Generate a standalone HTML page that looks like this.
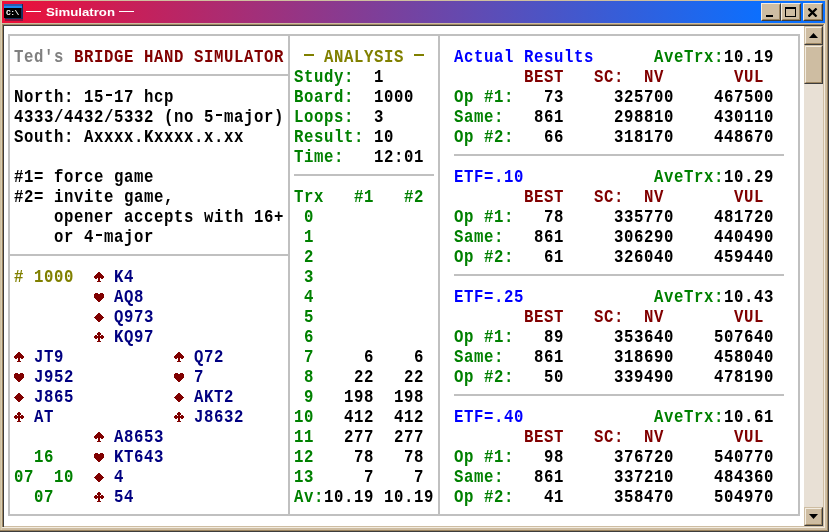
<!DOCTYPE html>
<html><head><meta charset="utf-8"><title>Simulatron</title>
<style>
html,body{margin:0;padding:0}
body{width:829px;height:532px;overflow:hidden;background:#cebda2;position:relative;font-family:"Liberation Mono",monospace}
.a{position:absolute}
.t{position:absolute;white-space:pre;font:bold 16.664px/20px "Liberation Mono",monospace;height:20px;transform-origin:0 16px;transform:scale(0.94,1.090);letter-spacing:0.638px;margin-left:0.4px}
.r{position:absolute}
.t s{color:transparent;text-decoration:none}
svg.s{position:absolute;width:10px;height:10px;fill:#800000;shape-rendering:crispEdges}
</style></head><body>
<div class="a" style="left:0;top:0;width:829px;height:532px;will-change:transform">
<!-- frame -->
<div class="a" style="left:0;top:0;width:829px;height:532px;background:#cfbf9f"></div>
<div class="a" style="left:1px;top:1px;width:826px;height:529px;background:#d9ceb2"></div>
<div class="a" style="left:827px;top:0;width:1px;height:531px;background:#9c8560"></div>
<div class="a" style="left:0;top:530px;width:828px;height:1px;background:#9c8560"></div>
<div class="a" style="left:828px;top:0;width:1px;height:532px;background:#3c3c3c"></div>
<div class="a" style="left:0;top:531px;width:829px;height:1px;background:#3c3c3c"></div>
<div class="a" style="left:2px;top:1px;width:825px;height:529px;background:#cebda2"></div>
<!-- title bar -->
<div class="a" style="left:2px;top:1px;width:823px;height:22px;background:linear-gradient(90deg,#ee0f37 0%,#0a70ff 93%)"></div>
<!-- icon -->
<div class="a" style="left:5px;top:19px;width:18px;height:2px;background:#8c1540"></div>
<div class="a" style="left:5px;top:4px;width:18px;height:15px;background:#16305c"></div>
<div class="a" style="left:4px;top:4px;width:18px;height:2px;background:#2a5cb0"></div>
<div class="a" style="left:4px;top:6px;width:18px;height:2px;background:#1e8cf0"></div>
<div class="a" style="left:4px;top:8px;width:17px;height:10px;background:#000"></div>
<div class="a" style="left:6px;top:8px;width:14px;height:10px;color:#fff;font:bold 8px/10px 'Liberation Mono',monospace;letter-spacing:-0.6px">C:\</div>
<!-- title text -->
<div class="a" style="left:26px;top:11px;width:15px;height:1px;background:#fff"></div>
<div class="a" style="left:119px;top:11px;width:15px;height:1px;background:#fff"></div>
<div class="a" id="ttl" style="left:46px;top:4px;height:16px;color:#fff;font:bold 11px/16px 'Liberation Sans',sans-serif;white-space:pre;transform-origin:0 0;transform:scaleX(1.2)">Simulatron</div>
<!-- caption buttons -->
<div class="a btn" style="left:761px;top:3px;width:20px;height:18px"><i></i><div class="a" style="left:4px;top:11px;width:7px;height:2px;background:#000"></div></div>
<div class="a btn" style="left:781px;top:3px;width:20px;height:18px"><i></i><div class="a" style="left:3px;top:3px;width:9px;height:7px;border:1px solid #000;border-top-width:2px"></div></div>
<div class="a btn" style="left:803px;top:3px;width:20px;height:18px"><i></i><svg class="a" style="left:4px;top:4px" width="10" height="9" viewBox="0 0 10 9"><path d="M0.5 0.5 L8.5 8.5 M8.5 0.5 L0.5 8.5" stroke="#000" stroke-width="2.3" fill="none"/></svg></div>
<!-- sunken client edge -->
<div class="a" style="left:2px;top:24px;width:822px;height:1px;background:#9c8560"></div>
<div class="a" style="left:2px;top:24px;width:1px;height:503px;background:#9c8560"></div>
<div class="a" style="left:3px;top:25px;width:820px;height:1px;background:#3c3c3c"></div>
<div class="a" style="left:3px;top:25px;width:1px;height:502px;background:#3c3c3c"></div>
<div class="a" style="left:824px;top:24px;width:1px;height:504px;background:#f3ece0"></div>
<div class="a" style="left:2px;top:527px;width:823px;height:1px;background:#f3ece0"></div>
<!-- scrollbar -->
<div class="a" style="left:804px;top:26px;width:19px;height:500px;background:#e8e0d5"></div>
<div class="a btn sb" style="left:804px;top:26px;width:19px;height:19px"><i></i><svg class="a" style="left:4px;top:6px" width="9" height="5" viewBox="0 0 9 5"><path d="M0 5 L4.5 0 L9 5 Z" fill="#000"/></svg></div>
<div class="a btn sb" style="left:804px;top:45px;width:19px;height:39px"><i></i></div>
<div class="a btn sb" style="left:804px;top:507px;width:19px;height:19px"><i></i><svg class="a" style="left:4px;top:6px" width="9" height="5" viewBox="0 0 9 5"><path d="M0 0 L4.5 5 L9 0 Z" fill="#000"/></svg></div>
<style>
.btn{background:#cebda2;box-sizing:border-box;border:1px solid;border-color:#f3ece0 #3c3c3c #3c3c3c #f3ece0}
.btn>i{position:absolute;left:0;top:0;right:0;bottom:0;border:1px solid;border-color:#cebda2 #9c8560 #9c8560 #cebda2}
.sb{border-color:#cebda2 #3c3c3c #3c3c3c #cebda2}
.sb>i{border-color:#f3ece0 #9c8560 #9c8560 #f3ece0}
</style>
<div class="a" style="left:4px;top:26px;width:800px;height:500px;background:#fff"></div>
<div class="r" style="left:8px;top:34px;width:792px;height:2px;background:#c0c0c0"></div>
<div class="r" style="left:8px;top:514px;width:792px;height:2px;background:#c0c0c0"></div>
<div class="r" style="left:8px;top:34px;width:2px;height:482px;background:#c0c0c0"></div>
<div class="r" style="left:798px;top:34px;width:2px;height:482px;background:#c0c0c0"></div>
<div class="r" style="left:288px;top:34px;width:2px;height:482px;background:#c0c0c0"></div>
<div class="r" style="left:438px;top:34px;width:2px;height:482px;background:#c0c0c0"></div>
<div class="r" style="left:8px;top:74px;width:282px;height:2px;background:#c0c0c0"></div>
<div class="r" style="left:8px;top:254px;width:282px;height:2px;background:#c0c0c0"></div>
<div class="r" style="left:294px;top:174px;width:140px;height:2px;background:#c0c0c0"></div>
<div class="r" style="left:454px;top:154px;width:330px;height:2px;background:#c0c0c0"></div>
<div class="r" style="left:454px;top:274px;width:330px;height:2px;background:#c0c0c0"></div>
<div class="r" style="left:454px;top:394px;width:330px;height:2px;background:#c0c0c0"></div>
<div class="r" style="left:304px;top:54px;width:10px;height:2px;background:#808000"></div>
<div class="r" style="left:414px;top:54px;width:10px;height:2px;background:#808000"></div>
<div class="t" style="left:14px;top:48.0px;color:#808080">Ted's</div>
<div class="t" style="left:74px;top:48.0px;color:#800000">BRIDGE HAND SIMULATOR</div>
<div class="r" style="left:106px;top:94px;width:6px;height:2px;background:#000000"></div>
<div class="t" style="left:14px;top:88.0px;color:#000000">North: 15<s>-</s>17 hcp</div>
<div class="r" style="left:216px;top:114px;width:6px;height:2px;background:#000000"></div>
<div class="t" style="left:14px;top:108.0px;color:#000000">4333/4432/5332 (no 5<s>-</s>major)</div>
<div class="t" style="left:14px;top:128.0px;color:#000000">South: Axxxx.Kxxxx.x.xx</div>
<div class="t" style="left:14px;top:168.0px;color:#000000">#1= force game</div>
<div class="t" style="left:14px;top:188.0px;color:#000000">#2= invite game,</div>
<div class="t" style="left:54px;top:208.0px;color:#000000">opener accepts with 16+</div>
<div class="r" style="left:96px;top:234px;width:6px;height:2px;background:#000000"></div>
<div class="t" style="left:54px;top:228.0px;color:#000000">or 4<s>-</s>major</div>
<div class="t" style="left:14px;top:268.0px;color:#808000"># 1000</div>
<div class="t" style="left:114px;top:268.0px;color:#000080">K4</div>
<div class="t" style="left:114px;top:288.0px;color:#000080">AQ8</div>
<div class="t" style="left:114px;top:308.0px;color:#000080">Q973</div>
<div class="t" style="left:114px;top:328.0px;color:#000080">KQ97</div>
<div class="t" style="left:34px;top:348.0px;color:#000080">JT9</div>
<div class="t" style="left:34px;top:368.0px;color:#000080">J952</div>
<div class="t" style="left:34px;top:388.0px;color:#000080">J865</div>
<div class="t" style="left:34px;top:408.0px;color:#000080">AT</div>
<div class="t" style="left:194px;top:348.0px;color:#000080">Q72</div>
<div class="t" style="left:194px;top:368.0px;color:#000080">7</div>
<div class="t" style="left:194px;top:388.0px;color:#000080">AKT2</div>
<div class="t" style="left:194px;top:408.0px;color:#000080">J8632</div>
<div class="t" style="left:114px;top:428.0px;color:#000080">A8653</div>
<div class="t" style="left:114px;top:448.0px;color:#000080">KT643</div>
<div class="t" style="left:114px;top:468.0px;color:#000080">4</div>
<div class="t" style="left:114px;top:488.0px;color:#000080">54</div>
<div class="t" style="left:34px;top:448.0px;color:#008000">16</div>
<div class="t" style="left:14px;top:468.0px;color:#008000">07</div>
<div class="t" style="left:54px;top:468.0px;color:#008000">10</div>
<div class="t" style="left:34px;top:488.0px;color:#008000">07</div>
<div class="t" style="left:324px;top:48.0px;color:#808000">ANALYSIS</div>
<div class="t" style="left:294px;top:68.0px;color:#008000">Study:</div>
<div class="t" style="left:374px;top:68.0px;color:#000000">1</div>
<div class="t" style="left:294px;top:88.0px;color:#008000">Board:</div>
<div class="t" style="left:374px;top:88.0px;color:#000000">1000</div>
<div class="t" style="left:294px;top:108.0px;color:#008000">Loops:</div>
<div class="t" style="left:374px;top:108.0px;color:#000000">3</div>
<div class="t" style="left:294px;top:128.0px;color:#008000">Result:</div>
<div class="t" style="left:374px;top:128.0px;color:#000000">10</div>
<div class="t" style="left:294px;top:148.0px;color:#008000">Time:</div>
<div class="t" style="left:374px;top:148.0px;color:#000000">12:01</div>
<div class="t" style="left:294px;top:188.0px;color:#008000">Trx</div>
<div class="t" style="left:354px;top:188.0px;color:#008000">#1</div>
<div class="t" style="left:404px;top:188.0px;color:#008000">#2</div>
<div class="t" style="left:304px;top:208.0px;color:#008000">0</div>
<div class="t" style="left:304px;top:228.0px;color:#008000">1</div>
<div class="t" style="left:304px;top:248.0px;color:#008000">2</div>
<div class="t" style="left:304px;top:268.0px;color:#008000">3</div>
<div class="t" style="left:304px;top:288.0px;color:#008000">4</div>
<div class="t" style="left:304px;top:308.0px;color:#008000">5</div>
<div class="t" style="left:304px;top:328.0px;color:#008000">6</div>
<div class="t" style="left:304px;top:348.0px;color:#008000">7</div>
<div class="t" style="left:364px;top:348.0px;color:#000000">6</div>
<div class="t" style="left:414px;top:348.0px;color:#000000">6</div>
<div class="t" style="left:304px;top:368.0px;color:#008000">8</div>
<div class="t" style="left:354px;top:368.0px;color:#000000">22</div>
<div class="t" style="left:404px;top:368.0px;color:#000000">22</div>
<div class="t" style="left:304px;top:388.0px;color:#008000">9</div>
<div class="t" style="left:344px;top:388.0px;color:#000000">198</div>
<div class="t" style="left:394px;top:388.0px;color:#000000">198</div>
<div class="t" style="left:294px;top:408.0px;color:#008000">10</div>
<div class="t" style="left:344px;top:408.0px;color:#000000">412</div>
<div class="t" style="left:394px;top:408.0px;color:#000000">412</div>
<div class="t" style="left:294px;top:428.0px;color:#008000">11</div>
<div class="t" style="left:344px;top:428.0px;color:#000000">277</div>
<div class="t" style="left:394px;top:428.0px;color:#000000">277</div>
<div class="t" style="left:294px;top:448.0px;color:#008000">12</div>
<div class="t" style="left:354px;top:448.0px;color:#000000">78</div>
<div class="t" style="left:404px;top:448.0px;color:#000000">78</div>
<div class="t" style="left:294px;top:468.0px;color:#008000">13</div>
<div class="t" style="left:364px;top:468.0px;color:#000000">7</div>
<div class="t" style="left:414px;top:468.0px;color:#000000">7</div>
<div class="t" style="left:294px;top:488.0px;color:#008000">Av:</div>
<div class="t" style="left:324px;top:488.0px;color:#000000">10.19 10.19</div>
<div class="t" style="left:454px;top:48.0px;color:#0000ff">Actual Results</div>
<div class="t" style="left:654px;top:48.0px;color:#008000">AveTrx:</div>
<div class="t" style="left:724px;top:48.0px;color:#000000">10.19</div>
<div class="t" style="left:524px;top:68.0px;color:#800000">BEST</div>
<div class="t" style="left:594px;top:68.0px;color:#800000">SC:</div>
<div class="t" style="left:644px;top:68.0px;color:#800000">NV</div>
<div class="t" style="left:734px;top:68.0px;color:#800000">VUL</div>
<div class="t" style="left:454px;top:88.0px;color:#008000">Op #1:</div>
<div class="t" style="left:544px;top:88.0px;color:#000000">73</div>
<div class="t" style="left:614px;top:88.0px;color:#000000">325700</div>
<div class="t" style="left:714px;top:88.0px;color:#000000">467500</div>
<div class="t" style="left:454px;top:108.0px;color:#008000">Same:</div>
<div class="t" style="left:534px;top:108.0px;color:#000000">861</div>
<div class="t" style="left:614px;top:108.0px;color:#000000">298810</div>
<div class="t" style="left:714px;top:108.0px;color:#000000">430110</div>
<div class="t" style="left:454px;top:128.0px;color:#008000">Op #2:</div>
<div class="t" style="left:544px;top:128.0px;color:#000000">66</div>
<div class="t" style="left:614px;top:128.0px;color:#000000">318170</div>
<div class="t" style="left:714px;top:128.0px;color:#000000">448670</div>
<div class="t" style="left:454px;top:168.0px;color:#0000ff">ETF=.10</div>
<div class="t" style="left:654px;top:168.0px;color:#008000">AveTrx:</div>
<div class="t" style="left:724px;top:168.0px;color:#000000">10.29</div>
<div class="t" style="left:524px;top:188.0px;color:#800000">BEST</div>
<div class="t" style="left:594px;top:188.0px;color:#800000">SC:</div>
<div class="t" style="left:644px;top:188.0px;color:#800000">NV</div>
<div class="t" style="left:734px;top:188.0px;color:#800000">VUL</div>
<div class="t" style="left:454px;top:208.0px;color:#008000">Op #1:</div>
<div class="t" style="left:544px;top:208.0px;color:#000000">78</div>
<div class="t" style="left:614px;top:208.0px;color:#000000">335770</div>
<div class="t" style="left:714px;top:208.0px;color:#000000">481720</div>
<div class="t" style="left:454px;top:228.0px;color:#008000">Same:</div>
<div class="t" style="left:534px;top:228.0px;color:#000000">861</div>
<div class="t" style="left:614px;top:228.0px;color:#000000">306290</div>
<div class="t" style="left:714px;top:228.0px;color:#000000">440490</div>
<div class="t" style="left:454px;top:248.0px;color:#008000">Op #2:</div>
<div class="t" style="left:544px;top:248.0px;color:#000000">61</div>
<div class="t" style="left:614px;top:248.0px;color:#000000">326040</div>
<div class="t" style="left:714px;top:248.0px;color:#000000">459440</div>
<div class="t" style="left:454px;top:288.0px;color:#0000ff">ETF=.25</div>
<div class="t" style="left:654px;top:288.0px;color:#008000">AveTrx:</div>
<div class="t" style="left:724px;top:288.0px;color:#000000">10.43</div>
<div class="t" style="left:524px;top:308.0px;color:#800000">BEST</div>
<div class="t" style="left:594px;top:308.0px;color:#800000">SC:</div>
<div class="t" style="left:644px;top:308.0px;color:#800000">NV</div>
<div class="t" style="left:734px;top:308.0px;color:#800000">VUL</div>
<div class="t" style="left:454px;top:328.0px;color:#008000">Op #1:</div>
<div class="t" style="left:544px;top:328.0px;color:#000000">89</div>
<div class="t" style="left:614px;top:328.0px;color:#000000">353640</div>
<div class="t" style="left:714px;top:328.0px;color:#000000">507640</div>
<div class="t" style="left:454px;top:348.0px;color:#008000">Same:</div>
<div class="t" style="left:534px;top:348.0px;color:#000000">861</div>
<div class="t" style="left:614px;top:348.0px;color:#000000">318690</div>
<div class="t" style="left:714px;top:348.0px;color:#000000">458040</div>
<div class="t" style="left:454px;top:368.0px;color:#008000">Op #2:</div>
<div class="t" style="left:544px;top:368.0px;color:#000000">50</div>
<div class="t" style="left:614px;top:368.0px;color:#000000">339490</div>
<div class="t" style="left:714px;top:368.0px;color:#000000">478190</div>
<div class="t" style="left:454px;top:408.0px;color:#0000ff">ETF=.40</div>
<div class="t" style="left:654px;top:408.0px;color:#008000">AveTrx:</div>
<div class="t" style="left:724px;top:408.0px;color:#000000">10.61</div>
<div class="t" style="left:524px;top:428.0px;color:#800000">BEST</div>
<div class="t" style="left:594px;top:428.0px;color:#800000">SC:</div>
<div class="t" style="left:644px;top:428.0px;color:#800000">NV</div>
<div class="t" style="left:734px;top:428.0px;color:#800000">VUL</div>
<div class="t" style="left:454px;top:448.0px;color:#008000">Op #1:</div>
<div class="t" style="left:544px;top:448.0px;color:#000000">98</div>
<div class="t" style="left:614px;top:448.0px;color:#000000">376720</div>
<div class="t" style="left:714px;top:448.0px;color:#000000">540770</div>
<div class="t" style="left:454px;top:468.0px;color:#008000">Same:</div>
<div class="t" style="left:534px;top:468.0px;color:#000000">861</div>
<div class="t" style="left:614px;top:468.0px;color:#000000">337210</div>
<div class="t" style="left:714px;top:468.0px;color:#000000">484360</div>
<div class="t" style="left:454px;top:488.0px;color:#008000">Op #2:</div>
<div class="t" style="left:544px;top:488.0px;color:#000000">41</div>
<div class="t" style="left:614px;top:488.0px;color:#000000">358470</div>
<div class="t" style="left:714px;top:488.0px;color:#000000">504970</div>
<svg class="s" viewBox="0 0 10 10" style="left:94px;top:272px;height:10px"><path d="M4 0h2v1h-2zM3 1h4v1h-4zM2 2h6v1h-6zM1 3h8v1h-8zM0 4h10v1h-10zM0 5h10v1h-10zM1 6h2v1h-2zM4 6h2v1h-2zM7 6h2v1h-2zM4 7h2v1h-2zM4 8h2v1h-2zM3 9h4v1h-4z"/></svg>
<svg class="s" viewBox="0 0 10 9" style="left:94px;top:293px;height:9px"><path d="M1 0h3v1h-3zM6 0h3v1h-3zM0 1h10v1h-10zM0 2h10v1h-10zM0 3h10v1h-10zM0 4h10v1h-10zM1 5h8v1h-8zM2 6h6v1h-6zM3 7h4v1h-4zM4 8h2v1h-2z"/></svg>
<svg class="s" viewBox="0 0 10 9" style="left:94px;top:313px;height:9px"><path d="M4 0h2v1h-2zM3 1h4v1h-4zM2 2h6v1h-6zM1 3h8v1h-8zM0 4h10v1h-10zM1 5h8v1h-8zM2 6h6v1h-6zM3 7h4v1h-4zM4 8h2v1h-2z"/></svg>
<svg class="s" viewBox="0 0 10 10" style="left:94px;top:332px;height:10px"><path d="M4 0h2v1h-2zM3 1h4v1h-4zM3 2h4v1h-4zM1 3h2v1h-2zM4 3h2v1h-2zM7 3h2v1h-2zM0 4h10v1h-10zM0 5h10v1h-10zM1 6h2v1h-2zM4 6h2v1h-2zM7 6h2v1h-2zM4 7h2v1h-2zM4 8h2v1h-2zM3 9h4v1h-4z"/></svg>
<svg class="s" viewBox="0 0 10 10" style="left:14px;top:352px;height:10px"><path d="M4 0h2v1h-2zM3 1h4v1h-4zM2 2h6v1h-6zM1 3h8v1h-8zM0 4h10v1h-10zM0 5h10v1h-10zM1 6h2v1h-2zM4 6h2v1h-2zM7 6h2v1h-2zM4 7h2v1h-2zM4 8h2v1h-2zM3 9h4v1h-4z"/></svg>
<svg class="s" viewBox="0 0 10 9" style="left:14px;top:373px;height:9px"><path d="M1 0h3v1h-3zM6 0h3v1h-3zM0 1h10v1h-10zM0 2h10v1h-10zM0 3h10v1h-10zM0 4h10v1h-10zM1 5h8v1h-8zM2 6h6v1h-6zM3 7h4v1h-4zM4 8h2v1h-2z"/></svg>
<svg class="s" viewBox="0 0 10 9" style="left:14px;top:393px;height:9px"><path d="M4 0h2v1h-2zM3 1h4v1h-4zM2 2h6v1h-6zM1 3h8v1h-8zM0 4h10v1h-10zM1 5h8v1h-8zM2 6h6v1h-6zM3 7h4v1h-4zM4 8h2v1h-2z"/></svg>
<svg class="s" viewBox="0 0 10 10" style="left:14px;top:412px;height:10px"><path d="M4 0h2v1h-2zM3 1h4v1h-4zM3 2h4v1h-4zM1 3h2v1h-2zM4 3h2v1h-2zM7 3h2v1h-2zM0 4h10v1h-10zM0 5h10v1h-10zM1 6h2v1h-2zM4 6h2v1h-2zM7 6h2v1h-2zM4 7h2v1h-2zM4 8h2v1h-2zM3 9h4v1h-4z"/></svg>
<svg class="s" viewBox="0 0 10 10" style="left:174px;top:352px;height:10px"><path d="M4 0h2v1h-2zM3 1h4v1h-4zM2 2h6v1h-6zM1 3h8v1h-8zM0 4h10v1h-10zM0 5h10v1h-10zM1 6h2v1h-2zM4 6h2v1h-2zM7 6h2v1h-2zM4 7h2v1h-2zM4 8h2v1h-2zM3 9h4v1h-4z"/></svg>
<svg class="s" viewBox="0 0 10 9" style="left:174px;top:373px;height:9px"><path d="M1 0h3v1h-3zM6 0h3v1h-3zM0 1h10v1h-10zM0 2h10v1h-10zM0 3h10v1h-10zM0 4h10v1h-10zM1 5h8v1h-8zM2 6h6v1h-6zM3 7h4v1h-4zM4 8h2v1h-2z"/></svg>
<svg class="s" viewBox="0 0 10 9" style="left:174px;top:393px;height:9px"><path d="M4 0h2v1h-2zM3 1h4v1h-4zM2 2h6v1h-6zM1 3h8v1h-8zM0 4h10v1h-10zM1 5h8v1h-8zM2 6h6v1h-6zM3 7h4v1h-4zM4 8h2v1h-2z"/></svg>
<svg class="s" viewBox="0 0 10 10" style="left:174px;top:412px;height:10px"><path d="M4 0h2v1h-2zM3 1h4v1h-4zM3 2h4v1h-4zM1 3h2v1h-2zM4 3h2v1h-2zM7 3h2v1h-2zM0 4h10v1h-10zM0 5h10v1h-10zM1 6h2v1h-2zM4 6h2v1h-2zM7 6h2v1h-2zM4 7h2v1h-2zM4 8h2v1h-2zM3 9h4v1h-4z"/></svg>
<svg class="s" viewBox="0 0 10 10" style="left:94px;top:432px;height:10px"><path d="M4 0h2v1h-2zM3 1h4v1h-4zM2 2h6v1h-6zM1 3h8v1h-8zM0 4h10v1h-10zM0 5h10v1h-10zM1 6h2v1h-2zM4 6h2v1h-2zM7 6h2v1h-2zM4 7h2v1h-2zM4 8h2v1h-2zM3 9h4v1h-4z"/></svg>
<svg class="s" viewBox="0 0 10 9" style="left:94px;top:453px;height:9px"><path d="M1 0h3v1h-3zM6 0h3v1h-3zM0 1h10v1h-10zM0 2h10v1h-10zM0 3h10v1h-10zM0 4h10v1h-10zM1 5h8v1h-8zM2 6h6v1h-6zM3 7h4v1h-4zM4 8h2v1h-2z"/></svg>
<svg class="s" viewBox="0 0 10 9" style="left:94px;top:473px;height:9px"><path d="M4 0h2v1h-2zM3 1h4v1h-4zM2 2h6v1h-6zM1 3h8v1h-8zM0 4h10v1h-10zM1 5h8v1h-8zM2 6h6v1h-6zM3 7h4v1h-4zM4 8h2v1h-2z"/></svg>
<svg class="s" viewBox="0 0 10 10" style="left:94px;top:492px;height:10px"><path d="M4 0h2v1h-2zM3 1h4v1h-4zM3 2h4v1h-4zM1 3h2v1h-2zM4 3h2v1h-2zM7 3h2v1h-2zM0 4h10v1h-10zM0 5h10v1h-10zM1 6h2v1h-2zM4 6h2v1h-2zM7 6h2v1h-2zM4 7h2v1h-2zM4 8h2v1h-2zM3 9h4v1h-4z"/></svg>
</div></body></html>
